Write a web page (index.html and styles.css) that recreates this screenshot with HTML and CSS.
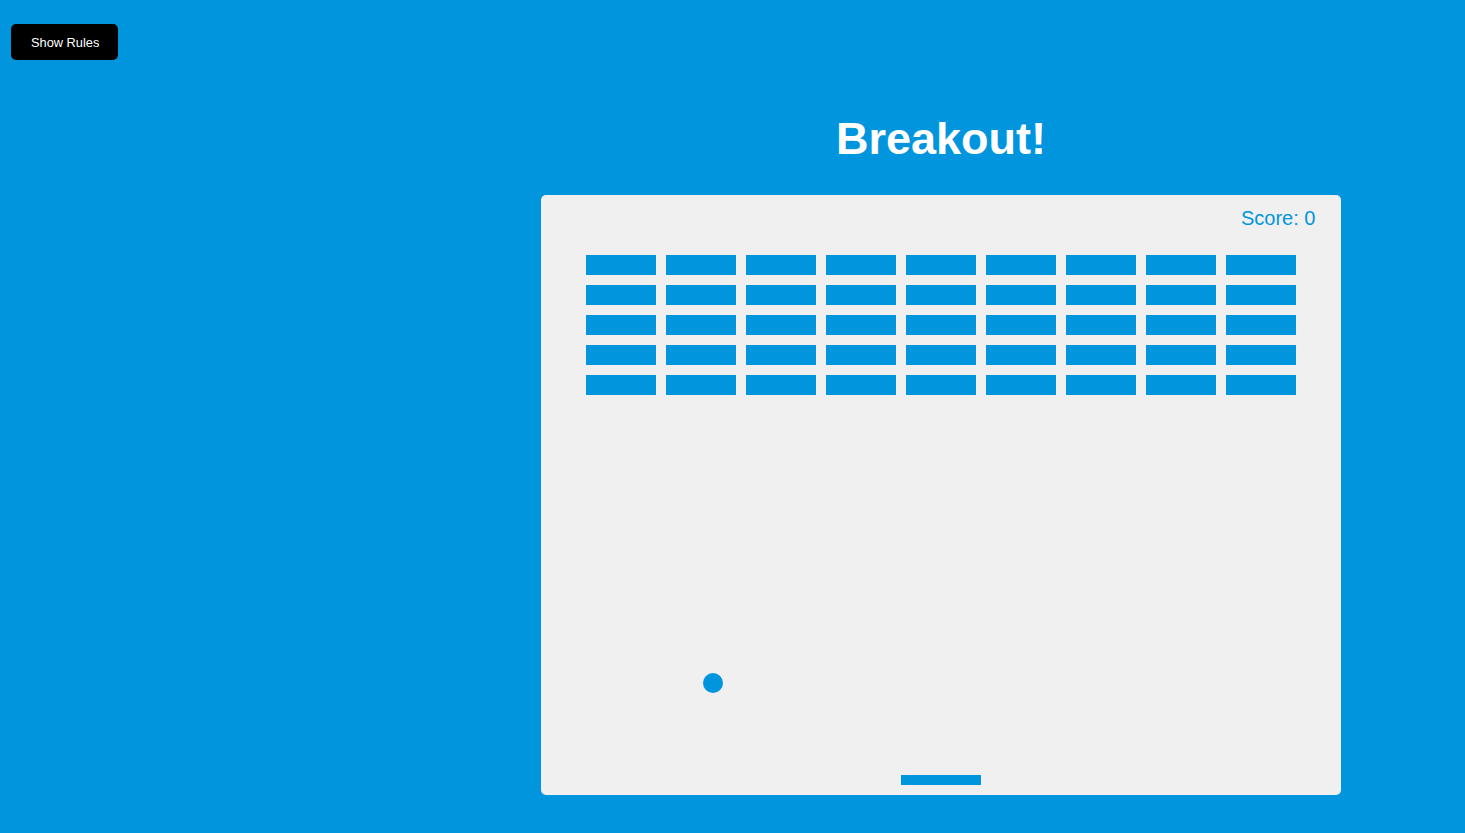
FILE: index.html
```html
<!DOCTYPE html>
<html lang="en">
<head>
<meta charset="utf-8">
<title>Breakout!</title>
<link rel="stylesheet" href="styles.css">
</head>
<body>
<button class="btn rules-btn">Show Rules</button>
<main class="main">
  <h1 class="title">Breakout!</h1>
  <div class="board">
    <div class="score">Score: 0</div>
    <div class="bricks">
      <span class="brick"></span><span class="brick"></span><span class="brick"></span><span class="brick"></span><span class="brick"></span><span class="brick"></span><span class="brick"></span><span class="brick"></span><span class="brick"></span>
      <span class="brick"></span><span class="brick"></span><span class="brick"></span><span class="brick"></span><span class="brick"></span><span class="brick"></span><span class="brick"></span><span class="brick"></span><span class="brick"></span>
      <span class="brick"></span><span class="brick"></span><span class="brick"></span><span class="brick"></span><span class="brick"></span><span class="brick"></span><span class="brick"></span><span class="brick"></span><span class="brick"></span>
      <span class="brick"></span><span class="brick"></span><span class="brick"></span><span class="brick"></span><span class="brick"></span><span class="brick"></span><span class="brick"></span><span class="brick"></span><span class="brick"></span>
      <span class="brick"></span><span class="brick"></span><span class="brick"></span><span class="brick"></span><span class="brick"></span><span class="brick"></span><span class="brick"></span><span class="brick"></span><span class="brick"></span>
    </div>
    <div class="ball"></div>
    <div class="paddle"></div>
  </div>
</main>
</body>
</html>
```
FILE: styles.css
```css
* { box-sizing: border-box; }
html, body { margin: 0; padding: 0; }
body {
  background: #0095dd;
  font-family: "Liberation Sans", Arial, sans-serif;
  min-height: 100vh;
  overflow: hidden;
}
.btn {
  cursor: pointer;
  border: 0;
  padding: 11px 20px 9px;
  width: 107px;
  background: #000;
  color: #fff;
  border-radius: 5px;
  font-family: "Liberation Sans", Arial, sans-serif;
  font-size: 12.8px;
  line-height: 16px;
  text-align: center;
  white-space: nowrap;
}
.rules-btn {
  position: absolute;
  top: 24px;
  left: 11px;
}
.main {
  padding: 113px 0 0 417px;
  display: flex;
  flex-direction: column;
  align-items: center;
}
.title {
  margin: 0 0 30px;
  font-size: 45px;
  line-height: 52px;
  font-weight: 700;
  color: #fff;
}
.board {
  position: relative;
  width: 800px;
  height: 600px;
  background: #f0f0f0;
  border-radius: 5px;
  padding: 60px 45px;
}
.score {
  position: absolute;
  left: 700px;
  top: 12px;
  font-size: 20px;
  line-height: 23px;
  color: #0095dd;
}
.bricks {
  display: grid;
  grid-template-columns: repeat(9, 70px);
  grid-auto-rows: 20px;
  gap: 10px;
}
.brick { background: #0095dd; }
.ball {
  position: absolute;
  left: 162px;
  top: 478px;
  width: 20px;
  height: 20px;
  border-radius: 50%;
  background: #0095dd;
}
.paddle {
  position: absolute;
  left: 360px;
  top: 580px;
  width: 80px;
  height: 10px;
  background: #0095dd;
}
```
